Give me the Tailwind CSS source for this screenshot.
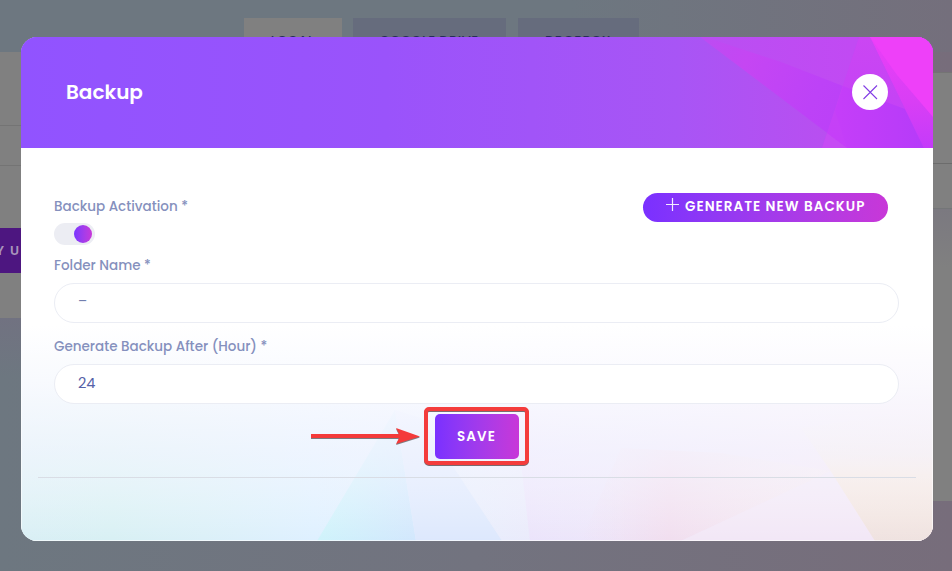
<!DOCTYPE html>
<html lang="en">
<head>
  <meta charset="UTF-8">
  <meta name="viewport" content="width=device-width, initial-scale=1.0">
  <title>Backup</title>
  <script src="https://cdn.jsdelivr.net/npm/@tailwindcss/browser@4"></script>
</head>
<body class="relative h-[571px] overflow-hidden bg-linear-to-r from-[#6d7780] via-[#72737f] to-[#776d7b] font-[Poppins,Inter,sans-serif]">

  <!-- Page behind the dialog -->
  <div class="flex h-[571px] justify-between">
    <div class="w-[21px] pt-[52px]">
      <div class="h-[266px] bg-[#808080] pt-[73px]">
        <div class="h-[40px] border-t border-[#747474]"></div>
        <div class="h-[63px] border-t border-[#747474]"></div>
        <div class="h-[45px] bg-[#4d1680] flex items-center justify-end gap-[6px] text-[13px] font-semibold text-[#a894bb] overflow-hidden whitespace-nowrap"><span>Y</span><span class="pr-[2px]">U</span></div>
      </div>
      <div class="h-[60px] bg-linear-to-b from-[#717281] to-[#6d7780]"></div>
    </div>
    <div class="absolute inset-x-0 top-0 h-[52px] bg-linear-to-r from-[#6d7780] from-60% to-[#746f7c]"></div>
    <div class="relative flex items-start pt-[18px] text-[13px] font-medium tracking-[0.5px] text-[#272d58]">
      <div class="w-[98px] h-[45px] bg-[#808080] pt-[13px] text-center ml-[-52px]">LOCAL</div>
      <div class="w-[153px] h-[45px] bg-[#666c7d] pt-[13px] text-center ml-[11px]">GOOGLE DRIVE</div>
      <div class="w-[121px] h-[45px] bg-[#666c7d] pt-[13px] text-center ml-[12px] mr-[20px]">DROPBOX</div>
    </div>
    <div class="w-[19px] pt-[72px]">
      <div class="h-[429px] bg-[#808080] border-t border-[#747474] pt-[90px]">
        <div class="h-[45px] border-t border-[#6c6c6c]"></div>
        <div class="h-[60px] border-t border-[#747678] bg-linear-to-b from-[#7b7980] to-[#808080]"></div>
      </div>
    </div>
  </div>

  <!-- Backup dialog -->
  <div class="absolute left-[21px] top-[37px] w-[912px] h-[504px] rounded-[16px] overflow-hidden bg-white">
    <div class="relative h-[111px] bg-[#9253ff]">
      <svg class="absolute inset-0" width="912" height="111" viewBox="0 0 912 111">
        <defs>
          <linearGradient id="head"><stop offset="0" stop-color="#9153ff"/><stop offset=".4" stop-color="#9a53fb"/><stop offset=".72" stop-color="#a855f5"/><stop offset=".9" stop-color="#ba4ef0"/></linearGradient>
          <linearGradient id="ray" gradientUnits="userSpaceOnUse" x1="679" y1="0" x2="912" y2="111"><stop offset="0" stop-color="#bb4df2"/><stop offset=".2" stop-color="#c546f3"/><stop offset=".5" stop-color="#bd42f7"/><stop offset="1" stop-color="#b83bf9"/></linearGradient>
          <linearGradient id="top" gradientUnits="userSpaceOnUse" x1="679" y1="0" x2="830" y2="0"><stop offset="0" stop-color="#b94ff2"/><stop offset="1" stop-color="#c14af3"/></linearGradient>
          <linearGradient id="mid" x2="0" y2="1"><stop offset="0" stop-color="#cb46f3"/><stop offset=".55" stop-color="#c543f5"/><stop offset="1" stop-color="#c53ef9"/></linearGradient>
          <linearGradient id="side" x2="0" y2="1"><stop offset="0" stop-color="#ea3ff8"/><stop offset=".6" stop-color="#d83ef5"/><stop offset="1" stop-color="#c43bfa"/></linearGradient>
          <linearGradient id="low"><stop offset="0" stop-color="#c53ef9"/><stop offset="1" stop-color="#b63bf9"/></linearGradient>
        </defs>
        <rect width="912" height="111" fill="url(#head)"/>
        <polygon points="679,0 912,0 912,111 826,111" fill="url(#ray)"/>
        <polygon points="684,0 838,0 822,49 760,25" fill="url(#top)"/>
        <polygon points="838,0 849,0 903,111 801,111" fill="url(#mid)"/>
        <polygon points="814,74 822,49 884,72 903,111 826,111" fill="url(#low)"/>
        <polygon points="849,0 912,0 912,111 903,111" fill="url(#side)"/>
        <polygon points="849,0 912,0 912,80 876,38" fill="#ee40f9"/>
        <polygon points="801,111 806,96 826,111" fill="#c64bf4"/>
      </svg>
      <div class="relative h-[110px] flex items-center justify-between pl-[45px] pr-[45px]">
        <h2 class="text-[20px] font-semibold text-white">Backup</h2>
        <button class="w-9 h-9 rounded-full bg-white flex items-center justify-center">
          <svg width="16" height="16" viewBox="0 0 16 16" fill="none" stroke="#823de5" stroke-width="1.1"><path d="M1.500 1.500 15 15M15 1.500 1.500 15"/></svg>
        </button>
      </div>
    </div>

    <div class="relative h-[393px]">
      <svg class="absolute inset-0" width="912" height="393" viewBox="0 0 912 393">
        <defs>
          <linearGradient id="base"><stop offset="0" stop-color="#d9eff5"/><stop offset=".1" stop-color="#d8f0f4"/><stop offset=".2" stop-color="#dbf0f8"/><stop offset=".32" stop-color="#def0ff"/><stop offset=".5" stop-color="#e8edfc"/><stop offset=".7" stop-color="#eee5f9"/><stop offset=".85" stop-color="#f3e5f5"/><stop offset="1" stop-color="#f5e2ee"/></linearGradient>
          <linearGradient id="fade" x2="0" y2="1"><stop offset="0.45" stop-color="#fff"/><stop offset=".6" stop-color="#fbfbff" stop-opacity=".9"/><stop offset=".78" stop-color="#f6f7ff" stop-opacity=".65"/><stop offset="1" stop-color="#fff" stop-opacity="0"/></linearGradient>
          <linearGradient id="pink" x1="0" y1="0" x2="1" y2="0"><stop offset="0" stop-color="#f0dff1" stop-opacity="0"/><stop offset=".35" stop-color="#f1deef"/><stop offset="1" stop-color="#f5ebef" stop-opacity=".5"/></linearGradient>
          <linearGradient id="cyan"><stop offset="0" stop-color="#cff3fb"/><stop offset="1" stop-color="#d2e7fd"/></linearGradient>
          <linearGradient id="violet"><stop offset="0" stop-color="#ebe3fb"/><stop offset="1" stop-color="#efe5f9" stop-opacity="0"/></linearGradient>
          <linearGradient id="peach" x2="0" y2="1"><stop offset="0" stop-color="#f6ebe6" stop-opacity="0"/><stop offset=".5" stop-color="#f6e7e0"/><stop offset="1" stop-color="#efe2e0"/></linearGradient>
        </defs>
        <rect width="912" height="393" fill="url(#base)"/>
        <polygon points="374,262 296,393 395,393" fill="url(#cyan)"/>
        <polygon points="374,262 395,393 481,393 400,270" fill="#dde8fd"/>
        <polygon points="494,262 509,393 665,393 670,262" fill="url(#violet)"/>
        <polygon points="560,393 660,393 810,323 700,305 600,300" fill="url(#pink)"/>
        <polygon points="660,393 810,323 854,393" fill="#f2e7f6"/>
        <polygon points="854,393 809,322 780,280 912,260 912,393" fill="url(#peach)"/>
        <rect width="912" height="393" fill="url(#fade)"/>
        <rect x="0.5" y="0" width="911" height="392.5" fill="none" stroke="#fff" stroke-opacity=".6"/>
      </svg>

      <form class="relative pl-[33px] pr-[34px] pt-[45px]">
        <div class="flex justify-between items-start h-[62px]">
          <div class="pt-[3px]">
            <label class="block h-5 leading-[22px] text-[13.5px] font-medium text-[#8590bd]">Backup Activation *</label>
            <div class="mt-[7px] w-[41px] h-[22px] rounded-full bg-[#ecedf3] p-[2px] pr-[3px] flex justify-end">
              <span class="w-[18px] h-[18px] rounded-full bg-linear-to-r from-[#7a34ff] to-[#c837d8]"></span>
            </div>
          </div>
          <button type="button" class="mr-[11px] w-[245px] h-[29px] rounded-full bg-linear-to-r from-[#7a30ff] to-[#c837d8] text-white flex items-start pl-[22px] gap-[5px]">
            <svg class="mt-[4px] shrink-0" width="15" height="15" viewBox="0 0 15 15" stroke="#fff" stroke-width="1.2" stroke-opacity=".9"><path d="M7.500 1v13M1 7.500h13"/></svg>
            <span class="leading-[27px] text-[13.5px] font-semibold tracking-[1.05px] whitespace-nowrap">GENERATE NEW BACKUP</span>
          </button>
        </div>

        <label class="block h-5 leading-[22px] text-[13.5px] font-medium text-[#8590bd]">Folder Name *</label>
        <div class="mt-2 h-10 rounded-full border border-[#ebedf4] bg-white pl-[23px] leading-[36px] text-[13.5px] text-[#727eae]">–</div>

        <label class="block mt-[13px] h-5 leading-[22px] text-[13.5px] font-medium text-[#8590bd]">Generate Backup After (Hour) *</label>
        <div class="mt-2 h-10 rounded-full border border-[#ebedf4] bg-white pl-[23px] leading-[37px] text-[14.5px] text-[#5662a8]">24</div>

        <div class="mt-[10px] flex justify-center">
          <button type="button" class="w-[84px] h-[45px] rounded-[5px] bg-linear-to-r from-[#7a30ff] to-[#c837d8] pt-px text-[13.5px] font-semibold tracking-[1.05px] text-white">SAVE</button>
        </div>
      </form>
      <div class="relative mt-[18px] ml-[17px] mr-[17px] border-t border-[#d9dde5]"></div>
    </div>
  </div>

  <!-- Callout on the save button -->
  <div class="absolute left-[424px] top-[407px] w-[105px] h-[58px] rounded-[5px] border-4 border-[#f43c3c] drop-shadow-[0_1px_0_#7b6b70]"></div>
  <svg class="absolute left-[310px] top-[426px] drop-shadow-[0_1px_0_#7b7b80]" width="112" height="20" viewBox="0 0 112 20" fill="#f43a3a"><path d="M1 8h88L86 2l24 8.500L86 18l3-6H1z"/></svg>
</body>
</html>
